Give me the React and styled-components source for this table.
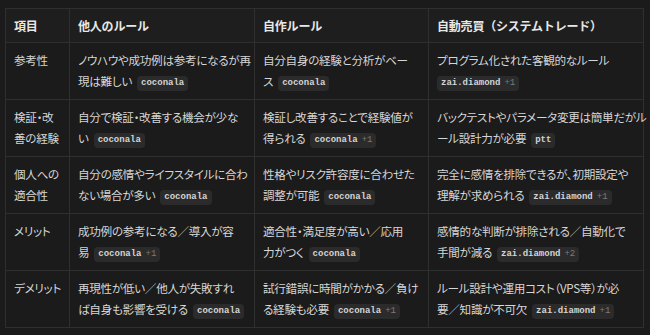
import styled, { createGlobalStyle } from "styled-components";

const GlobalStyle = createGlobalStyle`
    html, body {
        margin: 0;
        padding: 0;
        background: #1b1b1b;
    }
    body {
        font-family: "Noto Sans CJK JP", "Noto Sans", sans-serif;
        color: #d6d6d6;
    }
`;

// each cell: [first line, second line, source, extra count]
const rows = [
    {
        item: ["参考性"],
        others: ["ノウハウや成功例は参考になるが再", "現は難しい", "coconala"],
        own: ["自分自身の経験と分析がベー", "ス", "coconala"],
        auto: ["プログラム化された客観的なルール", "", "zai.diamond", "+1"],
    },
    {
        item: ["検証・改", "善の経験"],
        others: ["自分で検証・改善する機会が少な", "い", "coconala"],
        own: ["検証し改善することで経験値が", "得られる", "coconala", "+1"],
        auto: ["バックテストやパラメータ変更は簡単だがル", "ール設計力が必要", "ptt"],
    },
    {
        item: ["個人への", "適合性"],
        others: ["自分の感情やライフスタイルに合わ", "ない場合が多い", "coconala"],
        own: ["性格やリスク許容度に合わせた", "調整が可能", "coconala"],
        auto: ["完全に感情を排除できるが、初期設定や", "理解が求められる", "zai.diamond", "+1"],
    },
    {
        item: ["メリット"],
        others: ["成功例の参考になる／導入が容", "易", "coconala", "+1"],
        own: ["適合性・満足度が高い／応用", "力がつく", "coconala"],
        auto: ["感情的な判断が排除される／自動化で", "手間が減る", "zai.diamond", "+2"],
    },
    {
        item: ["デメリット"],
        others: ["再現性が低い／他人が失敗すれ", "ば自身も影響を受ける", "coconala"],
        own: ["試行錯誤に時間がかかる／負け", "る経験も必要", "coconala", "+1"],
        auto: ["ルール設計や運用コスト（VPS等）が必", "要／知識が不可欠", "zai.diamond", "+1"],
    },
];

const Cell = ({ data }) => {
    const [first, second, source, more] = data;
    return (
        <Td>
            <Line>{first}</Line>
            <Line>
                {second}
                <Chip $lead={!second}>
                    {source}
                    {more && <More>{more}</More>}
                </Chip>
            </Line>
        </Td>
    );
};

const App = () => {
    return (
        <Page>
            <GlobalStyle />
            <Table>
                <colgroup>
                    <col style={{ width: 64 }} />
                    <col style={{ width: 185 }} />
                    <col style={{ width: 174 }} />
                    <col style={{ width: 215 }} />
                </colgroup>
                <thead>
                    <tr>
                        <Th>項目</Th>
                        <Th>他人のルール</Th>
                        <Th>自作ルール</Th>
                        <Th>自動売買（システムトレード）</Th>
                    </tr>
                </thead>
                <tbody>
                    {rows.map((row) => (
                        <tr key={row.item.join("")}>
                            <Td>
                                {row.item.map((l) => (
                                    <Line key={l}>{l}</Line>
                                ))}
                            </Td>
                            <Cell data={row.others} />
                            <Cell data={row.own} />
                            <Cell data={row.auto} />
                        </tr>
                    ))}
                </tbody>
            </Table>
        </Page>
    );
};

const Page = styled.div`
    padding: 8px 6px 8px 5px;
`;
const Table = styled.table`
    width: 639px;
    table-layout: fixed;
    border-collapse: collapse;
    border: 1px solid #2f2f2f;
`;
const Th = styled.th`
    height: 33px;
    padding: 0 8px;
    text-align: left;
    font-size: 12px;
    font-weight: 700;
    letter-spacing: -0.2px;
    color: #e8e8e8;
    border: 1px solid #2f2f2f;
    background: #1e1e1e;
    white-space: nowrap;
`;
const Td = styled.td`
    height: 57px;
    padding: 7px 8px;
    box-sizing: border-box;
    vertical-align: top;
    border: 1px solid #2f2f2f;
    background: #1b1b1b;
    font-size: 11.6px;
    letter-spacing: -0.3px;
    font-feature-settings: "palt";
`;
const Line = styled.div`
    height: 21px;
    line-height: 21px;
    white-space: nowrap;
`;
const Chip = styled.span`
    display: inline-block;
    margin-left: ${(p) => (p.$lead ? "0" : "5px")};
    padding: 0 4px;
    height: 15px;
    line-height: 15px;
    border-radius: 4px;
    background: #2b2b2b;
    color: #d4d4d4;
    font-family: "Liberation Mono", monospace;
    font-size: 9px;
    font-weight: 700;
    letter-spacing: 0;
    vertical-align: 1px;
    font-feature-settings: normal;
`;
const More = styled.span`
    margin-left: 4px;
    color: #7a7a7a;
    font-weight: 400;
`;

export default App;
